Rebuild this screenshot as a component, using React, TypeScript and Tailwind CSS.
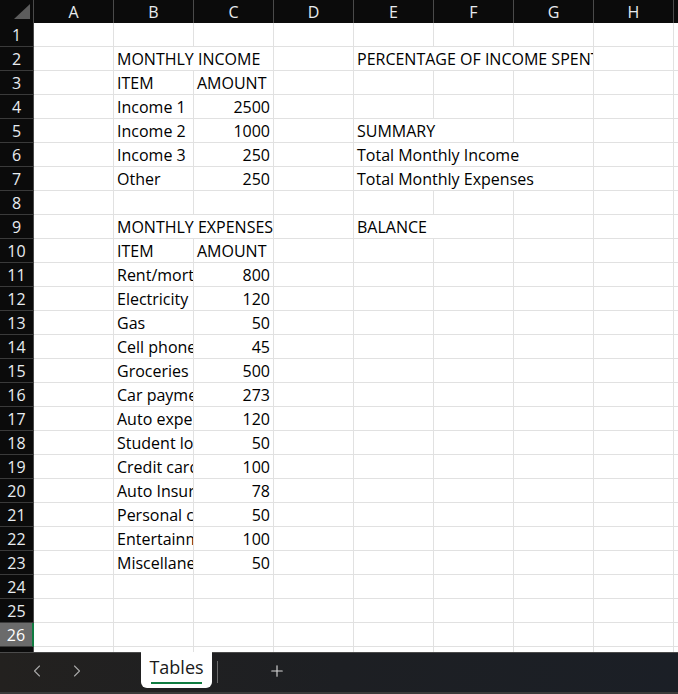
import { ChevronLeft, ChevronRight, Plus } from "lucide-react";

type Cell = { text: string; span?: number; right?: boolean };

const COLS = ["A", "B", "C", "D", "E", "F", "G", "H"];

// row number -> column index (0 = A) -> cell
const data: Record<number, Record<number, Cell>> = {
  2: { 1: { text: "MONTHLY INCOME", span: 2 }, 4: { text: "PERCENTAGE OF INCOME SPENT", span: 3 } },
  3: { 1: { text: "ITEM" }, 2: { text: "AMOUNT" } },
  4: { 1: { text: "Income 1" }, 2: { text: "2500", right: true } },
  5: { 1: { text: "Income 2" }, 2: { text: "1000", right: true }, 4: { text: "SUMMARY", span: 2 } },
  6: { 1: { text: "Income 3" }, 2: { text: "250", right: true }, 4: { text: "Total Monthly Income", span: 3 } },
  7: { 1: { text: "Other" }, 2: { text: "250", right: true }, 4: { text: "Total Monthly Expenses", span: 3 } },
  9: { 1: { text: "MONTHLY EXPENSES", span: 2 }, 4: { text: "BALANCE", span: 2 } },
  10: { 1: { text: "ITEM" }, 2: { text: "AMOUNT" } },
  11: { 1: { text: "Rent/mortgage" }, 2: { text: "800", right: true } },
  12: { 1: { text: "Electricity" }, 2: { text: "120", right: true } },
  13: { 1: { text: "Gas" }, 2: { text: "50", right: true } },
  14: { 1: { text: "Cell phone" }, 2: { text: "45", right: true } },
  15: { 1: { text: "Groceries" }, 2: { text: "500", right: true } },
  16: { 1: { text: "Car payment" }, 2: { text: "273", right: true } },
  17: { 1: { text: "Auto expenses" }, 2: { text: "120", right: true } },
  18: { 1: { text: "Student loans" }, 2: { text: "50", right: true } },
  19: { 1: { text: "Credit cards" }, 2: { text: "100", right: true } },
  20: { 1: { text: "Auto Insurance" }, 2: { text: "78", right: true } },
  21: { 1: { text: "Personal care" }, 2: { text: "50", right: true } },
  22: { 1: { text: "Entertainment" }, 2: { text: "100", right: true } },
  23: { 1: { text: "Miscellaneous" }, 2: { text: "50", right: true } },
};

const rows = Array.from({ length: 27 }, (_, i) => i + 1);

function Row({ n }: { n: number }) {
  const cells = data[n] || {};
  const out: React.ReactNode[] = [];
  let c = 0;
  while (c < 8) {
    const cell = cells[c];
    const span = cell?.span ?? 1;
    out.push(
      <div
        key={c}
        style={{ gridColumn: `span ${span} / span ${span}` }}
        className={`h-6 border-r border-b border-[#e1e1e1] overflow-hidden whitespace-nowrap pl-[3px] pr-[3px] leading-[24px] text-[16px] text-black ${
          cell?.right ? "text-right" : "text-left"
        }`}
      >
        {cell?.text}
      </div>
    );
    c += span;
  }
  const selected = n === 26;
  return (
    <>
      <div
        className={`h-6 flex items-center justify-center text-[16px] border-b border-[#3a3a3a] ${
          selected
            ? "bg-[#6b6b6b] text-white border-r-2 border-r-[#107c41]"
            : "bg-[#0b0b0b] text-[#e8ecf0] border-r border-r-[#4a4a4a]"
        }`}
      >
        {n}
      </div>
      {out}
      <div className="h-6 border-b border-[#e1e1e1]" />
    </>
  );
}

export default function App() {
  return (
    <div
      className="w-[678px] h-[694px] flex flex-col bg-white overflow-hidden"
      style={{ fontFamily: '"Open Sans", "Noto Sans", sans-serif' }}
    >
      <div className="h-[652px] overflow-hidden">
        <div className="grid grid-cols-[34px_repeat(8,80px)_1fr]">
          {/* corner */}
          <div className="h-[23px] bg-[#0b0b0b] border-r border-[#4a4a4a] relative">
            <svg width="34" height="23" className="absolute inset-0">
              <polygon points="30,4 30,19 14,19" fill="#5c5c5c" />
            </svg>
          </div>
          {COLS.map((c) => (
            <div
              key={c}
              className="h-[23px] bg-[#0b0b0b] border-r border-[#4a4a4a] text-[#e8ecf0] text-[16px] flex items-center justify-center"
            >
              {c}
            </div>
          ))}
          <div className="h-[23px] bg-[#0b0b0b]" />
          {rows.map((n) => (
            <Row key={n} n={n} />
          ))}
        </div>
      </div>

      {/* sheet tabs */}
      <div className="h-[42px] relative bg-gradient-to-r from-[#23211f] via-[#1d1f23] to-[#1b1f26] border-t border-[#4b4b4b] border-b-2 border-b-[#3a3a3a]">
        <div className="absolute left-[27px] top-[8px] text-[#a8a8a8]">
          <ChevronLeft size={20} strokeWidth={1.3} />
        </div>
        <div className="absolute left-[67px] top-[8px] text-[#a8a8a8]">
          <ChevronRight size={20} strokeWidth={1.3} />
        </div>
        <div className="absolute left-[141px] -top-px w-[71px] h-[36px] bg-white rounded-b-md flex flex-col items-center justify-center">
          <span className="text-[18px] text-[#1a1a1a] leading-none mt-[1px]">Tables</span>
          <div className="w-[51px] h-[2px] bg-[#107c41] mt-[6px]" />
        </div>
        <div className="absolute left-[217px] top-[8px] w-px h-[22px] bg-[#6b6b6b]" />
        <div className="absolute left-[268px] top-[9px] text-[#d8d8d8]">
          <Plus size={18} strokeWidth={1.5} />
        </div>
      </div>
    </div>
  );
}
